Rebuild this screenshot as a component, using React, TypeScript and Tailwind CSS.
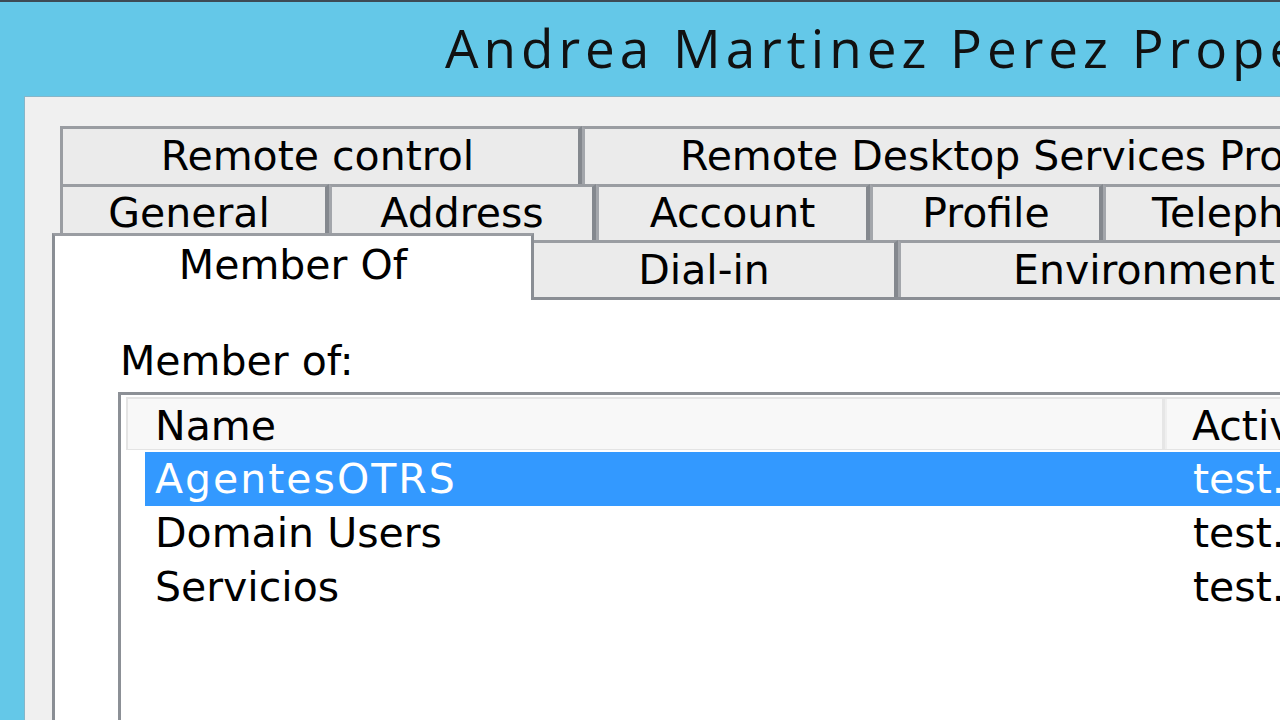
import React from "react";

const DLG = "font-['DejaVu_Sans',Verdana,sans-serif] text-[41px] leading-none text-black";

type TabProps = {
  label: string;
  className: string;
  inner?: string;
};

// One tab header of the multi-row tab strip.
function Tab({ label, className, inner = "justify-center" }: TabProps) {
  return (
    <div className={`shrink-0 flex items-center bg-[#ebebeb] border-t-[3px] border-t-[#9a9da2] ${inner} ${className}`}>
      <span className="whitespace-nowrap">{label}</span>
    </div>
  );
}

const groups = [
  { name: "AgentesOTRS", folder: "test.local/Users", selected: true },
  { name: "Domain Users", folder: "test.local/Users", selected: false },
  { name: "Servicios", folder: "test.local/Users", selected: false },
];

export default function App() {
  return (
    <div className="w-[1280px] h-[720px] overflow-hidden bg-[#64c8e8] flex flex-col">
      {/* window frame top edge */}
      <div className="h-[2px] shrink-0 bg-[#3d4b55]" />

      {/* caption */}
      <div className="h-[94px] shrink-0 pl-[445px] pt-[19px]">
        <div className="font-['Open_Sans',sans-serif] text-[53px] leading-none tracking-[5px] text-[#111] whitespace-nowrap">
          Andrea Martinez Perez Properties
        </div>
      </div>

      {/* dialog client area */}
      <div className={`ml-[24px] w-[1600px] flex-1 flex flex-col bg-[#f0f0f0] border-l border-t border-[#86b6c9] pt-[29px] pl-[27px] ${DLG}`}>
        {/* tab row 1 */}
        <div className="ml-[8px] flex h-[58px] shrink-0">
          <Tab label="Remote control" className="w-[522px] border-l-[3px] border-l-[#9a9da2] border-r-[4px] border-r-[#84888e] pr-[6px]" />
          <Tab
            label="Remote Desktop Services Profile"
            className="w-[900px] border-l-[3px] border-l-[#a3a6ab]"
            inner="justify-start pl-[95px]"
          />
        </div>

        {/* tab row 2 */}
        <div className="ml-[8px] flex h-[56px] shrink-0">
          <Tab label="General" className="w-[269px] border-l-[3px] border-l-[#9a9da2] border-r-[4px] border-r-[#84888e] pr-[10px]" />
          <Tab label="Address" className="w-[267px] border-l-[3px] border-l-[#a3a6ab] border-r-[4px] border-r-[#84888e]" />
          <Tab label="Account" className="w-[274px] border-l-[3px] border-l-[#a3a6ab] border-r-[4px] border-r-[#84888e]" />
          <Tab label="Profile" className="w-[233px] border-l-[3px] border-l-[#a3a6ab] border-r-[4px] border-r-[#84888e]" />
          <Tab
            label="Telephones"
            className="w-[400px] border-l-[3px] border-l-[#a3a6ab]"
            inner="justify-start pl-[46px]"
          />
        </div>

        {/* tab row 3, holding the selected tab */}
        <div className="flex items-end h-[57px] shrink-0">
          <div className="relative z-10 shrink-0 w-[482px] h-[67px] -mt-[7px] -mb-[3px] flex items-center justify-center pb-[6px] bg-white border-t-[3px] border-l-[3px] border-r-[3px] border-t-[#9a9da2] border-l-[#8a8e94] border-r-[#8a8e94]">
            <span className="whitespace-nowrap">Member Of</span>
          </div>
          <Tab label="Dial-in" className="w-[364px] h-[57px] border-r-[4px] border-r-[#84888e] pr-[20px]" />
          <Tab
            label="Environment"
            className="w-[400px] h-[57px] border-l-[3px] border-l-[#a3a6ab]"
            inner="justify-start pl-[112px]"
          />
        </div>

        {/* tab page */}
        <div className="flex-1 flex flex-col bg-white border-t-[3px] border-l-[3px] border-[#8a8e94] pl-[63px] pt-[41px]">
          <div className="pl-[2px] h-[41px] shrink-0 whitespace-nowrap">Member of:</div>

          {/* list view */}
          <div className="mt-[10px] flex-1 flex flex-col border-t-[3px] border-l-[3px] border-[#8c9096] pl-[5px] pt-[2px]">
            {/* column headers */}
            <div className="flex h-[53px] shrink-0 bg-[#f8f8f8] border-t-2 border-l-2 border-b border-[#e4e4e4]">
              <div className="w-[1037px] shrink-0 flex items-center pl-[27px] pt-[5px] border-r-[3px] border-r-[#e6e6e6]">
                Name
              </div>
              <div className="flex items-center pl-[25px] pt-[5px] border-l-2 border-l-[#efefef] whitespace-nowrap">
                Active Directory Domain Services Folder
              </div>
            </div>

            {/* rows */}
            <div className="ml-[19px] mt-[2px] flex flex-col">
              {groups.map((g) => (
                <div
                  key={g.name}
                  className={
                    g.selected
                      ? "flex items-center h-[54px] bg-[#3399ff] text-white"
                      : "flex items-center h-[54px]"
                  }
                >
                  <div className={g.selected ? "w-[1048px] shrink-0 pl-[10px] tracking-[2px]" : "w-[1048px] shrink-0 pl-[10px]"}>
                    {g.name}
                  </div>
                  <div className="whitespace-nowrap">{g.folder}</div>
                </div>
              ))}
            </div>
          </div>
        </div>
      </div>
    </div>
  );
}
